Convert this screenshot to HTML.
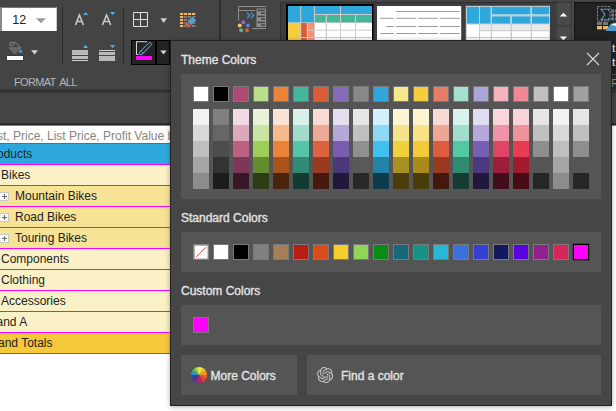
<!DOCTYPE html>
<html><head><meta charset="utf-8"><title>Color picker</title>
<style>
html,body{margin:0;padding:0;}
body{width:616px;height:411px;overflow:hidden;position:relative;background:#fff;font-family:"Liberation Sans",sans-serif;}
div,svg,span{position:absolute;box-sizing:border-box;}
.t{white-space:nowrap;line-height:1;}
.h{transform-origin:0 50%;color:#e4e4e4;font-size:12px;-webkit-text-stroke:0.35px #e4e4e4;}
</style></head><body>

<div style="left:0;top:0;width:616px;height:124px;background:#444444"></div>
<svg style="left:0;top:0" width="616" height="130"><rect x="0" y="89.4" width="616" height="3.2" fill="#303030"/><rect x="0" y="123.2" width="616" height="3" fill="#2a2a2a"/></svg>
<svg style="left:0;top:120px" width="616" height="10"><rect x="0" y="5.6" width="616" height="5" fill="#fff"/></svg>
<div style="left:0;top:126px;width:616px;height:285px;background:#fff"></div>
<div class="t" style="left:-3px;top:130px;font-size:12px;color:#8a8480">st, Price, List Price, Profit Value by</div>
<div style="left:0;top:143px;width:172px;height:22px;background:#2EA8DC;border-top:1px solid #f0f;"></div>
<div class="t" style="left:-3px;top:148px;font-size:12px;color:#222">oducts</div>
<div style="left:0;top:164px;width:172px;height:22px;background:#FBF1C6;border-top:1px solid #f0f;"></div>
<div class="t" style="left:1px;top:169px;font-size:12px;color:#222">Bikes</div>
<div style="left:0;top:185px;width:172px;height:22px;background:#F7E395;border-top:1px solid #f0f;"></div>
<div class="t" style="left:15px;top:190px;font-size:12px;color:#222">Mountain Bikes</div>
<div style="left:-1px;top:192px;width:10px;height:9px;border:1px solid #c8c8c8;background:#fafafa"></div>
<div style="left:2px;top:196px;width:5px;height:1px;background:#666"></div>
<div style="left:4px;top:194px;width:1px;height:5px;background:#666"></div>
<div style="left:0;top:206px;width:172px;height:22px;background:#F7E395;border-top:1px solid #f0f;"></div>
<div class="t" style="left:15px;top:211px;font-size:12px;color:#222">Road Bikes</div>
<div style="left:-1px;top:213px;width:10px;height:9px;border:1px solid #c8c8c8;background:#fafafa"></div>
<div style="left:2px;top:217px;width:5px;height:1px;background:#666"></div>
<div style="left:4px;top:215px;width:1px;height:5px;background:#666"></div>
<div style="left:0;top:227px;width:172px;height:22px;background:#F7E395;border-top:1px solid #f0f;"></div>
<div class="t" style="left:15px;top:232px;font-size:12px;color:#222">Touring Bikes</div>
<div style="left:-1px;top:234px;width:10px;height:9px;border:1px solid #c8c8c8;background:#fafafa"></div>
<div style="left:2px;top:238px;width:5px;height:1px;background:#666"></div>
<div style="left:4px;top:236px;width:1px;height:5px;background:#666"></div>
<div style="left:0;top:248px;width:172px;height:22px;background:#FBF1C6;border-top:1px solid #f0f;"></div>
<div class="t" style="left:1px;top:253px;font-size:12px;color:#222">Components</div>
<div style="left:0;top:269px;width:172px;height:22px;background:#FBF1C6;border-top:1px solid #f0f;"></div>
<div class="t" style="left:1px;top:274px;font-size:12px;color:#222">Clothing</div>
<div style="left:0;top:290px;width:172px;height:22px;background:#FBF1C6;border-top:1px solid #f0f;"></div>
<div class="t" style="left:1px;top:295px;font-size:12px;color:#222">Accessories</div>
<div style="left:0;top:311px;width:172px;height:22px;background:#FBF1C6;border-top:1px solid #f0f;"></div>
<div class="t" style="left:-3.5px;top:316px;font-size:12px;color:#222">and A</div>
<div style="left:0;top:332px;width:172px;height:22px;background:#F5C93B;border-top:1px solid #f0f;"></div>
<div class="t" style="left:-2px;top:337px;font-size:12px;color:#222">and Totals</div>
<div style="left:0;top:353px;width:172px;height:1px;background:#f0f"></div>
<div style="left:0px;top:7px;width:57px;height:24px;background:#fff;border-left:2px solid #8a8a8a;border-top:1px solid #777;border-right:1px solid #ccc"></div>
<div class="t" style="left:12.3px;top:14px;font-size:12.5px;color:#222">12</div>
<div class="t" style="left:14px;top:77px;font-size:11px;color:#b4b4b4;letter-spacing:-0.68px;word-spacing:2.1px">FORMAT ALL</div>
<div style="left:280px;top:2px;width:292px;height:40px;background:#3d3d3d;border-left:1px solid #2e2e2e;border-top:1px solid #2e2e2e"></div>
<div style="left:574px;top:2px;width:42px;height:72px;background:#222;border-left:1px solid #111;border-top:1px solid #111"></div>
<div style="left:574px;top:74px;width:42px;height:15px;background:#2b2b2b;border-top:1px solid #555"></div>
<div class="t" style="left:612px;top:43.3px;font-size:11.5px;color:#fff">t</div>
<div class="t" style="left:612px;top:56.9px;font-size:11.5px;color:#fff">t</div>
<div class="t" style="left:611px;top:78px;font-size:11px;color:#999">R</div>
<svg style="left:0;top:0" width="616" height="411" viewBox="0 0 616 411"><path d="M36 18.2H46L41 23.2Z" fill="#9a9a9a"/><rect x="62" y="7" width="1" height="58" fill="#2e2e2e"/><rect x="123" y="7" width="1" height="58" fill="#2e2e2e"/><rect x="219" y="0" width="2" height="40" fill="#2e2e2e"/><path d="M9 47.8H20.6L14.6 53.8Z" fill="#646464" stroke="#858585" stroke-width="0.7"/><path d="M10.3 45.8V42.6H15.4L20.6 47.8M10.3 45.3H12.6L15 43.4" fill="none" stroke="#8c8c8c" stroke-width="0.9"/><path d="M20.6 49.1L22 51.2A1.45 1.45 0 1 1 19.2 51.2Z" fill="#559fd6"/><rect x="6.5" y="55.5" width="17" height="5" fill="#333"/><rect x="7" y="56" width="16" height="4" fill="#fff"/><path d="M31 50.3H38L34.5 54.6Z" fill="#d0d0d0"/><path d="M75.4 25.1L79.45 15L83.5 25.1M76.9 21.6H82M102.4 25.1L106.55 15L110.7 25.1M104 21.6H109.1" fill="none" stroke="#c8c8c8" stroke-width="1.5" stroke-linejoin="miter"/><path d="M83 15.1H88.2L85.6 11.9Z" fill="#5aa8dc"/><path d="M110 12H115.2L112.6 15.2Z" fill="#5aa8dc"/><path d="M83 48H88.2L85.6 44.8Z" fill="#5aa8dc"/><path d="M110 45H115.2L112.6 48.2Z" fill="#5aa8dc"/><g fill="#b8b8b8" stroke="#d4d4d4" stroke-width="0.6"><rect x="72.3" y="50.3" width="15.4" height="4.4"/><rect x="72.3" y="56.3" width="15.4" height="2.4"/><rect x="99.3" y="52.3" width="15.4" height="2.4"/><rect x="99.3" y="56.3" width="15.4" height="4.4"/></g><rect x="72" y="60" width="16" height="1" fill="#d0d0d0"/><rect x="99" y="50" width="16" height="1" fill="#d0d0d0"/><path d="M133.5 12.5H147.5V26.5H133.5ZM140.5 12.5V26.5M133.5 19.5H147.5" fill="none" stroke="#e0e0e0" stroke-width="1"/><path d="M160.4 18.2H167L163.7 23Z" fill="#d0d0d0"/><rect x="180" y="13" width="3.2" height="2" fill="#f2b866"/><rect x="184" y="13" width="3.2" height="2" fill="#f2b866"/><rect x="188" y="13" width="3.2" height="2" fill="#f2b866"/><rect x="192" y="13" width="3.2" height="2" fill="#f2b866"/><rect x="180" y="16" width="3.2" height="2" fill="#f2b866"/><rect x="184" y="16" width="3.2" height="2" fill="#808080"/><rect x="188" y="16" width="3.2" height="2" fill="#808080"/><rect x="192" y="16" width="3.2" height="2" fill="#808080"/><rect x="180" y="19" width="3.2" height="2" fill="#f2b866"/><rect x="184" y="19" width="3.2" height="2" fill="#808080"/><rect x="188" y="19" width="3.2" height="2" fill="#808080"/><rect x="192" y="19" width="3.2" height="2" fill="#808080"/><rect x="180" y="22" width="3.2" height="2" fill="#f2b866"/><rect x="184" y="22" width="3.2" height="2" fill="#808080"/><rect x="188" y="22" width="3.2" height="2" fill="#808080"/><rect x="192" y="22" width="3.2" height="2" fill="#808080"/><rect x="180" y="25" width="3.2" height="2" fill="#f2b866"/><rect x="184" y="25" width="3.2" height="2" fill="#808080"/><rect x="188" y="25" width="3.2" height="2" fill="#808080"/><rect x="192" y="25" width="3.2" height="2" fill="#808080"/><path d="M187.2 21.7L192.6 16.3L196.4 20.4L191 25.6Z" fill="#559fd2" stroke="#444" stroke-width="0.6"/><path d="M184.3 23.8L186.6 21.9L190.8 26L188.6 28.3Z" fill="#e0604a" stroke="#444" stroke-width="0.6"/><path d="M238.5 20.5V6.5H266M238.5 10.5H255M252 28.5H266" fill="none" stroke="#8e8e8e" stroke-width="1"/><rect x="256.5" y="8.5" width="9.5" height="18.5" fill="#8e8e8e"/><rect x="257.6" y="9.6" width="7.3" height="1.6" fill="#444"/><rect x="261" y="12.3" width="3.9" height="1.6" fill="#444"/><rect x="257.6" y="15.6" width="7.3" height="1.6" fill="#444"/><rect x="261" y="18.3" width="3.9" height="1.6" fill="#444"/><rect x="257.6" y="21.6" width="7.3" height="1.6" fill="#444"/><rect x="261" y="24.3" width="3.9" height="1.6" fill="#444"/><path d="M246.9 12.7L249.7 15.4L246.9 18.1M250.9 12.7L253.7 15.4L250.9 18.1" fill="none" stroke="#3aa0e0" stroke-width="1.2"/><circle cx="243.4" cy="22.2" r="2" fill="#a060c0"/><circle cx="239.7" cy="25.4" r="2" fill="#f0c070"/><circle cx="248" cy="25.4" r="2" fill="#4a80d0"/><circle cx="241.1" cy="30.2" r="2" fill="#6aaa8a"/><circle cx="247" cy="30.2" r="2" fill="#e06030"/><rect x="286" y="4" width="87.5" height="40" fill="#000"/><rect x="288" y="6" width="84" height="38" fill="#ccc"/><rect x="288" y="6" width="12.2" height="16.3" fill="#2EA8DC"/><rect x="301.2" y="6" width="12.8" height="16.3" fill="#2EA8DC"/><rect x="315" y="6" width="25" height="8" fill="#2EA8DC"/><rect x="341" y="6" width="31" height="8" fill="#2EA8DC"/><rect x="315" y="15" width="10.7" height="7.3" fill="#42B79A"/><rect x="327" y="15" width="13" height="7.3" fill="#42B79A"/><rect x="341" y="15" width="14" height="7.3" fill="#42B79A"/><rect x="356" y="15" width="16" height="7.3" fill="#42B79A"/><rect x="288" y="23" width="12.2" height="14" fill="#F5CD3D"/><rect x="288" y="38" width="12.2" height="6" fill="#F5CD3D"/><rect x="301.2" y="23" width="5.6" height="14" fill="#DC5C35"/><rect x="301.2" y="38" width="5.6" height="6" fill="#DC5C35"/><rect x="307.8" y="23" width="6.2" height="6.7" fill="#FA9070"/><rect x="307.8" y="30.7" width="6.2" height="6.3" fill="#FA9070"/><rect x="307.8" y="38" width="6.2" height="6" fill="#FA9070"/><rect x="315" y="23" width="10.699999999999989" height="6.699999999999999" fill="#fff"/><rect x="315" y="30.7" width="10.699999999999989" height="6.300000000000001" fill="#fff"/><rect x="315" y="38" width="10.699999999999989" height="6" fill="#fff"/><rect x="327" y="23" width="13" height="6.699999999999999" fill="#fff"/><rect x="327" y="30.7" width="13" height="6.300000000000001" fill="#fff"/><rect x="327" y="38" width="13" height="6" fill="#fff"/><rect x="341" y="23" width="14" height="6.699999999999999" fill="#fff"/><rect x="341" y="30.7" width="14" height="6.300000000000001" fill="#fff"/><rect x="341" y="38" width="14" height="6" fill="#fff"/><rect x="356" y="23" width="16" height="6.699999999999999" fill="#fff"/><rect x="356" y="30.7" width="16" height="6.300000000000001" fill="#fff"/><rect x="356" y="38" width="16" height="6" fill="#fff"/><rect x="377" y="6" width="84.2" height="38" fill="#fff"/><g fill="#9a9a9a"><rect x="396.2" y="11" width="63.6" height="1"/><rect x="380.3" y="17.8" width="13.5" height="1"/><rect x="396.2" y="17.8" width="19.6" height="1"/><rect x="418.2" y="17.8" width="19.6" height="1"/><rect x="440.2" y="17.8" width="19.6" height="1"/><rect x="386.4" y="26" width="7.400000000000034" height="1"/><rect x="396.2" y="26" width="19.6" height="1"/><rect x="418.2" y="26" width="19.6" height="1"/><rect x="440.2" y="26" width="19.6" height="1"/><rect x="380.3" y="33" width="13.5" height="1"/><rect x="396.2" y="33" width="19.6" height="1"/><rect x="418.2" y="33" width="19.6" height="1"/><rect x="440.2" y="33" width="19.6" height="1"/></g><rect x="465.8" y="5.8" width="84.2" height="38" fill="#ccc"/><rect x="466.8" y="6.8" width="82.4" height="37" fill="#fff"/><rect x="466.8" y="6.8" width="12.2" height="17" fill="#2EA8DC"/><rect x="480" y="6.8" width="10.8" height="17" fill="#2EA8DC"/><rect x="492" y="6.8" width="38.7" height="7.8" fill="#2EA8DC"/><rect x="532" y="6.8" width="17.2" height="7.8" fill="#2EA8DC"/><rect x="492" y="16.2" width="18.6" height="7.6" fill="#2EA8DC"/><rect x="512" y="16.2" width="18.7" height="7.6" fill="#2EA8DC"/><rect x="532" y="16.2" width="17.2" height="7.6" fill="#2EA8DC"/><rect x="480" y="24.5" width="69.2" height="5.3" fill="#e8e8e8"/><g fill="#ccc"><rect x="479" y="6.8" width="1" height="37"/><rect x="490.8" y="6.8" width="1.2" height="37"/><rect x="510.6" y="14.6" width="1.4" height="30"/><rect x="530.7" y="6.8" width="1.3" height="37"/><rect x="492" y="14.6" width="57" height="1.6"/><rect x="466.8" y="23.8" width="82.4" height="0.8"/><rect x="480" y="30" width="69.2" height="1.2"/><rect x="466.8" y="37" width="82.4" height="1"/></g><rect x="557" y="2.7" width="13.4" height="22.2" fill="#4a4a4a"/><rect x="557" y="26.8" width="13.4" height="15" fill="#4a4a4a"/><path d="M559.7 16.6H567.1L563.4 12.7Z" fill="#fff"/><path d="M559.7 36.4H567.1L563.4 40.3Z" fill="#fff"/><rect x="572" y="2" width="2" height="40" fill="#4a4a4a"/><rect x="597.5" y="6.5" width="12.5" height="14.5" fill="none" stroke="#888" stroke-width="1" stroke-dasharray="2.2 1.2"/><path d="M608.6 11V9.3H601L605 14.6L601 19.8H608.6V18" fill="none" stroke="#4a9ad0" stroke-width="1.1"/><rect x="611.3" y="9.5" width="2.8" height="3" fill="#777"/><rect x="615" y="9.5" width="1" height="3" fill="#777"/><rect x="611.3" y="13.5" width="2.8" height="3" fill="#777"/><rect x="615" y="13.5" width="1" height="3" fill="#777"/><rect x="611.3" y="17.5" width="2.8" height="3" fill="#777"/><rect x="615" y="17.5" width="1" height="3" fill="#777"/><rect x="597" y="22" width="5" height="3" fill="#777"/><rect x="603" y="22" width="5" height="3" fill="#777"/><rect x="597" y="26" width="5" height="3.4" fill="#f0b860"/><rect x="603" y="26" width="5" height="3.4" fill="#f0b860"/><path d="M605.5 31L610.5 24Q612.5 22 616 22.5V31Z" fill="#4a9ad0"/><path d="M611 25Q613 23 616 23.5V26Q613.5 25 611 25Z" fill="#fff"/></svg>
<div style="left:170px;top:40px;width:442px;height:366px;background:#464646;border:1px solid #222;box-shadow:0 1px 5px rgba(0,0,0,.32)"></div>
<div style="left:131px;top:40px;width:39px;height:25px;background:#000"></div>
<div style="left:132px;top:41px;width:23px;height:23px;background:#232323"></div>
<div style="left:157px;top:41px;width:12px;height:23px;background:#232323"></div>
<div style="left:136px;top:56px;width:16px;height:4px;background:#f0f"></div>
<svg style="left:131px;top:40px" width="40" height="25" viewBox="131 40 40 25"><path d="M138.5 54.5H136.5V41.7H147" fill="none" stroke="#d8d8d8" stroke-width="1"/><g transform="rotate(-45 145.5 48.5)"><rect x="137.5" y="46.9" width="15.6" height="3.2" rx="1.4" fill="none" stroke="#5a9fd0" stroke-width="1"/><path d="M140.6 46.9V50.1" fill="none" stroke="#5a9fd0" stroke-width="0.9"/></g><path d="M160.3 50.4H166.7L163.5 54.6Z" fill="#d8d8d8"/></svg>
<div class="t h" style="left:181px;top:54px;transform:scaleX(1)">Theme Colors</div>
<svg style="left:586px;top:52px" width="14" height="14"><path d="M1 1L13 13M13 1L1 13" stroke="#d8d8d8" stroke-width="1.1" fill="none"/></svg>
<div style="left:181px;top:74px;width:420px;height:125px;background:#555"></div>
<div style="left:193px;top:86px;width:16px;height:16px;background:#FFFFFF;border:1px solid #7a7a7a"></div>
<div style="left:193px;top:109px;width:16px;height:16px;background:#F2F2F2"></div>
<div style="left:193px;top:125px;width:16px;height:16px;background:#D9D9D9"></div>
<div style="left:193px;top:141px;width:16px;height:16px;background:#BFBFBF"></div>
<div style="left:193px;top:157px;width:16px;height:16px;background:#A6A6A6"></div>
<div style="left:193px;top:173px;width:16px;height:16px;background:#8C8C8C"></div>
<div style="left:213px;top:86px;width:16px;height:16px;background:#000000;border:1px solid #7a7a7a"></div>
<div style="left:213px;top:109px;width:16px;height:16px;background:#808080"></div>
<div style="left:213px;top:125px;width:16px;height:16px;background:#666666"></div>
<div style="left:213px;top:141px;width:16px;height:16px;background:#4D4D4D"></div>
<div style="left:213px;top:157px;width:16px;height:16px;background:#333333"></div>
<div style="left:213px;top:173px;width:16px;height:16px;background:#1C1C1C"></div>
<div style="left:233px;top:86px;width:16px;height:16px;background:#B04A75;border:1px solid #7a7a7a"></div>
<div style="left:233px;top:109px;width:16px;height:16px;background:#F0DBE3"></div>
<div style="left:233px;top:125px;width:16px;height:16px;background:#DDA8BC"></div>
<div style="left:233px;top:141px;width:16px;height:16px;background:#BC6084"></div>
<div style="left:233px;top:157px;width:16px;height:16px;background:#7E3756"></div>
<div style="left:233px;top:173px;width:16px;height:16px;background:#371828"></div>
<div style="left:253px;top:86px;width:16px;height:16px;background:#B9E088;border:1px solid #7a7a7a"></div>
<div style="left:253px;top:109px;width:16px;height:16px;background:#E8F4D9"></div>
<div style="left:253px;top:125px;width:16px;height:16px;background:#C8E6A1"></div>
<div style="left:253px;top:141px;width:16px;height:16px;background:#9DCE57"></div>
<div style="left:253px;top:157px;width:16px;height:16px;background:#658C2E"></div>
<div style="left:253px;top:173px;width:16px;height:16px;background:#2C3D14"></div>
<div style="left:273px;top:86px;width:16px;height:16px;background:#EC8438;border:1px solid #7a7a7a"></div>
<div style="left:273px;top:109px;width:16px;height:16px;background:#FBE3D3"></div>
<div style="left:273px;top:125px;width:16px;height:16px;background:#F5B98B"></div>
<div style="left:273px;top:141px;width:16px;height:16px;background:#EA8337"></div>
<div style="left:273px;top:157px;width:16px;height:16px;background:#A9531A"></div>
<div style="left:273px;top:173px;width:16px;height:16px;background:#4B240B"></div>
<div style="left:293px;top:86px;width:16px;height:16px;background:#42B79A;border:1px solid #7a7a7a"></div>
<div style="left:293px;top:109px;width:16px;height:16px;background:#D9F1EA"></div>
<div style="left:293px;top:125px;width:16px;height:16px;background:#A0DCCB"></div>
<div style="left:293px;top:141px;width:16px;height:16px;background:#57C4A8"></div>
<div style="left:293px;top:157px;width:16px;height:16px;background:#318A74"></div>
<div style="left:293px;top:173px;width:16px;height:16px;background:#133B31"></div>
<div style="left:313px;top:86px;width:16px;height:16px;background:#DC5C35;border:1px solid #7a7a7a"></div>
<div style="left:313px;top:109px;width:16px;height:16px;background:#F8DCD3"></div>
<div style="left:313px;top:125px;width:16px;height:16px;background:#EDA993"></div>
<div style="left:313px;top:141px;width:16px;height:16px;background:#DC6341"></div>
<div style="left:313px;top:157px;width:16px;height:16px;background:#9A3A20"></div>
<div style="left:313px;top:173px;width:16px;height:16px;background:#45190E"></div>
<div style="left:333px;top:86px;width:16px;height:16px;background:#846BB9;border:1px solid #7a7a7a"></div>
<div style="left:333px;top:109px;width:16px;height:16px;background:#E4DEF0"></div>
<div style="left:333px;top:125px;width:16px;height:16px;background:#B6A8D6"></div>
<div style="left:333px;top:141px;width:16px;height:16px;background:#7A5DB3"></div>
<div style="left:333px;top:157px;width:16px;height:16px;background:#4C3778"></div>
<div style="left:333px;top:173px;width:16px;height:16px;background:#21183A"></div>
<div style="left:353px;top:86px;width:16px;height:16px;background:#888888;border:1px solid #7a7a7a"></div>
<div style="left:353px;top:109px;width:16px;height:16px;background:#E6E6E6"></div>
<div style="left:353px;top:125px;width:16px;height:16px;background:#C0C0C0"></div>
<div style="left:353px;top:141px;width:16px;height:16px;background:#909090"></div>
<div style="left:353px;top:157px;width:16px;height:16px;background:#595959"></div>
<div style="left:353px;top:173px;width:16px;height:16px;background:#282828"></div>
<div style="left:373px;top:86px;width:16px;height:16px;background:#2EA8DC;border:1px solid #7a7a7a"></div>
<div style="left:373px;top:109px;width:16px;height:16px;background:#D2F1FC"></div>
<div style="left:373px;top:125px;width:16px;height:16px;background:#8EDAF5"></div>
<div style="left:373px;top:141px;width:16px;height:16px;background:#40C0EE"></div>
<div style="left:373px;top:157px;width:16px;height:16px;background:#2282A8"></div>
<div style="left:373px;top:173px;width:16px;height:16px;background:#0E3A4E"></div>
<div style="left:393px;top:86px;width:16px;height:16px;background:#F7E88E;border:1px solid #7a7a7a"></div>
<div style="left:393px;top:109px;width:16px;height:16px;background:#FBF5D3"></div>
<div style="left:393px;top:125px;width:16px;height:16px;background:#F5E38B"></div>
<div style="left:393px;top:141px;width:16px;height:16px;background:#EFD140"></div>
<div style="left:393px;top:157px;width:16px;height:16px;background:#A89020"></div>
<div style="left:393px;top:173px;width:16px;height:16px;background:#4A3F0C"></div>
<div style="left:413px;top:86px;width:16px;height:16px;background:#F5CD3D;border:1px solid #7a7a7a"></div>
<div style="left:413px;top:109px;width:16px;height:16px;background:#FCF3D1"></div>
<div style="left:413px;top:125px;width:16px;height:16px;background:#F7E288"></div>
<div style="left:413px;top:141px;width:16px;height:16px;background:#F3CB39"></div>
<div style="left:413px;top:157px;width:16px;height:16px;background:#AB8A1C"></div>
<div style="left:413px;top:173px;width:16px;height:16px;background:#4A3C09"></div>
<div style="left:433px;top:86px;width:16px;height:16px;background:#E57E65;border:1px solid #7a7a7a"></div>
<div style="left:433px;top:109px;width:16px;height:16px;background:#F9DAD3"></div>
<div style="left:433px;top:125px;width:16px;height:16px;background:#EDA794"></div>
<div style="left:433px;top:141px;width:16px;height:16px;background:#DC5E40"></div>
<div style="left:433px;top:157px;width:16px;height:16px;background:#9A3820"></div>
<div style="left:433px;top:173px;width:16px;height:16px;background:#45180E"></div>
<div style="left:453px;top:86px;width:16px;height:16px;background:#A3E0CE;border:1px solid #7a7a7a"></div>
<div style="left:453px;top:109px;width:16px;height:16px;background:#D9F2EB"></div>
<div style="left:453px;top:125px;width:16px;height:16px;background:#A1DFCC"></div>
<div style="left:453px;top:141px;width:16px;height:16px;background:#53C8A5"></div>
<div style="left:453px;top:157px;width:16px;height:16px;background:#2E8B70"></div>
<div style="left:453px;top:173px;width:16px;height:16px;background:#133D31"></div>
<div style="left:473px;top:86px;width:16px;height:16px;background:#ADA4D8;border:1px solid #7a7a7a"></div>
<div style="left:473px;top:109px;width:16px;height:16px;background:#E1DDF0"></div>
<div style="left:473px;top:125px;width:16px;height:16px;background:#B4A7D9"></div>
<div style="left:473px;top:141px;width:16px;height:16px;background:#7560B5"></div>
<div style="left:473px;top:157px;width:16px;height:16px;background:#4A3880"></div>
<div style="left:473px;top:173px;width:16px;height:16px;background:#1F183A"></div>
<div style="left:493px;top:86px;width:16px;height:16px;background:#F3B4C0;border:1px solid #7a7a7a"></div>
<div style="left:493px;top:109px;width:16px;height:16px;background:#FAD5DC"></div>
<div style="left:493px;top:125px;width:16px;height:16px;background:#EE94A7"></div>
<div style="left:493px;top:141px;width:16px;height:16px;background:#DF4565"></div>
<div style="left:493px;top:157px;width:16px;height:16px;background:#9B1F3A"></div>
<div style="left:493px;top:173px;width:16px;height:16px;background:#420D1A"></div>
<div style="left:513px;top:86px;width:16px;height:16px;background:#F08898;border:1px solid #7a7a7a"></div>
<div style="left:513px;top:109px;width:16px;height:16px;background:#FAD3D9"></div>
<div style="left:513px;top:125px;width:16px;height:16px;background:#F0919E"></div>
<div style="left:513px;top:141px;width:16px;height:16px;background:#E83C52"></div>
<div style="left:513px;top:157px;width:16px;height:16px;background:#A11B2C"></div>
<div style="left:513px;top:173px;width:16px;height:16px;background:#460C13"></div>
<div style="left:533px;top:86px;width:16px;height:16px;background:#C0C0C0;border:1px solid #7a7a7a"></div>
<div style="left:533px;top:109px;width:16px;height:16px;background:#E6E6E6"></div>
<div style="left:533px;top:125px;width:16px;height:16px;background:#C0C0C0"></div>
<div style="left:533px;top:141px;width:16px;height:16px;background:#8E8E8E"></div>
<div style="left:533px;top:157px;width:16px;height:16px;background:#555555"></div>
<div style="left:533px;top:173px;width:16px;height:16px;background:#262626"></div>
<div style="left:553px;top:86px;width:16px;height:16px;background:#FFFFFF;border:1px solid #7a7a7a"></div>
<div style="left:553px;top:109px;width:16px;height:16px;background:#F2F2F2"></div>
<div style="left:553px;top:125px;width:16px;height:16px;background:#D9D9D9"></div>
<div style="left:553px;top:141px;width:16px;height:16px;background:#BFBFBF"></div>
<div style="left:553px;top:157px;width:16px;height:16px;background:#A6A6A6"></div>
<div style="left:553px;top:173px;width:16px;height:16px;background:#8C8C8C"></div>
<div style="left:573px;top:86px;width:16px;height:16px;background:#A0A0A0;border:1px solid #7a7a7a"></div>
<div style="left:573px;top:109px;width:16px;height:16px;background:#E6E6E6"></div>
<div style="left:573px;top:125px;width:16px;height:16px;background:#C0C0C0"></div>
<div style="left:573px;top:141px;width:16px;height:16px;background:#8E8E8E"></div>
<div style="left:573px;top:157px;width:16px;height:16px;background:#555555"></div>
<div style="left:573px;top:173px;width:16px;height:16px;background:#262626"></div>
<div class="t h" style="left:181px;top:212px;transform:scaleX(1)">Standard Colors</div>
<div style="left:181px;top:232px;width:420px;height:40px;background:#555"></div>
<svg style="left:193px;top:244px" width="16" height="16"><rect x="0" y="0" width="16" height="16" fill="#848484"/><rect x="1.6" y="1.6" width="13" height="13" fill="#fff"/><path d="M3.2 13L13 3.2" stroke="#e8452c" stroke-width="1"/></svg>
<div style="left:213px;top:244px;width:16px;height:16px;background:#FFFFFF;border:1px solid #7a7a7a"></div>
<div style="left:233px;top:244px;width:16px;height:16px;background:#000000;border:1px solid #7a7a7a"></div>
<div style="left:253px;top:244px;width:16px;height:16px;background:#808080;border:1px solid #7a7a7a"></div>
<div style="left:273px;top:244px;width:16px;height:16px;background:#A67F59;border:1px solid #7a7a7a"></div>
<div style="left:293px;top:244px;width:16px;height:16px;background:#B81C12;border:1px solid #7a7a7a"></div>
<div style="left:313px;top:244px;width:16px;height:16px;background:#DC4C18;border:1px solid #7a7a7a"></div>
<div style="left:333px;top:244px;width:16px;height:16px;background:#F7CE2D;border:1px solid #7a7a7a"></div>
<div style="left:353px;top:244px;width:16px;height:16px;background:#8FD55B;border:1px solid #7a7a7a"></div>
<div style="left:373px;top:244px;width:16px;height:16px;background:#078C14;border:1px solid #7a7a7a"></div>
<div style="left:393px;top:244px;width:16px;height:16px;background:#176878;border:1px solid #7a7a7a"></div>
<div style="left:413px;top:244px;width:16px;height:16px;background:#149284;border:1px solid #7a7a7a"></div>
<div style="left:433px;top:244px;width:16px;height:16px;background:#27B8D4;border:1px solid #7a7a7a"></div>
<div style="left:453px;top:244px;width:16px;height:16px;background:#3A70DE;border:1px solid #7a7a7a"></div>
<div style="left:473px;top:244px;width:16px;height:16px;background:#3340D2;border:1px solid #7a7a7a"></div>
<div style="left:493px;top:244px;width:16px;height:16px;background:#111A5E;border:1px solid #7a7a7a"></div>
<div style="left:513px;top:244px;width:16px;height:16px;background:#5A03E0;border:1px solid #7a7a7a"></div>
<div style="left:533px;top:244px;width:16px;height:16px;background:#92208F;border:1px solid #7a7a7a"></div>
<div style="left:553px;top:244px;width:16px;height:16px;background:#D6275D;border:1px solid #7a7a7a"></div>
<div style="left:573px;top:244px;width:16px;height:16px;background:#FF00FF;border:1px solid #000;box-shadow:0 0 0 0.3px #000"></div>
<div class="t h" style="left:181px;top:285px;transform:scaleX(1)">Custom Colors</div>
<div style="left:181px;top:305px;width:420px;height:40px;background:#555"></div>
<div style="left:193px;top:317px;width:16px;height:16px;background:#f0f;border:1px solid #7a7a7a"></div>
<div style="left:181px;top:355px;width:116px;height:40px;background:#555"></div>
<div style="left:307px;top:355px;width:294px;height:40px;background:#555"></div>
<div class="t h" style="left:210.5px;top:369.5px;transform:scaleX(1)">More Colors</div>
<div class="t h" style="left:341px;top:369.5px;transform:scaleX(1)">Find a color</div>
<svg style="left:190px;top:366px" width="18" height="18" viewBox="-9 -9 18 18"><path d="M0 0L0.00 -8.10A8.1 8.1 0 0 1 4.05 -7.01Z" fill="#F5EC3D"/><path d="M0 0L4.05 -7.01A8.1 8.1 0 0 1 7.01 -4.05Z" fill="#F7B731"/><path d="M0 0L7.01 -4.05A8.1 8.1 0 0 1 8.10 0.00Z" fill="#F7931E"/><path d="M0 0L8.10 0.00A8.1 8.1 0 0 1 7.01 4.05Z" fill="#F05A28"/><path d="M0 0L7.01 4.05A8.1 8.1 0 0 1 4.05 7.01Z" fill="#EE3E2C"/><path d="M0 0L4.05 7.01A8.1 8.1 0 0 1 0.00 8.10Z" fill="#C1274A"/><path d="M0 0L0.00 8.10A8.1 8.1 0 0 1 -4.05 7.01Z" fill="#8E2B8E"/><path d="M0 0L-4.05 7.01A8.1 8.1 0 0 1 -7.01 4.05Z" fill="#5B2D90"/><path d="M0 0L-7.01 4.05A8.1 8.1 0 0 1 -8.10 0.00Z" fill="#3F3F9F"/><path d="M0 0L-8.10 0.00A8.1 8.1 0 0 1 -7.01 -4.05Z" fill="#2790D0"/><path d="M0 0L-7.01 -4.05A8.1 8.1 0 0 1 -4.05 -7.01Z" fill="#5DB446"/><path d="M0 0L-4.05 -7.01A8.1 8.1 0 0 1 -0.00 -8.10Z" fill="#C6DC3C"/></svg>
<svg style="left:317px;top:366.8px" width="16.2" height="16.2" viewBox="0 0 24 24"><path d="M22.2819 9.8211a5.9847 5.9847 0 0 0-.5157-4.9108 6.0462 6.0462 0 0 0-6.5098-2.9A6.0651 6.0651 0 0 0 4.9807 4.1818a5.9847 5.9847 0 0 0-3.9977 2.9 6.0462 6.0462 0 0 0 .7427 7.0966 5.98 5.98 0 0 0 .511 4.9107 6.051 6.051 0 0 0 6.5146 2.9001A5.9847 5.9847 0 0 0 13.2599 24a6.0557 6.0557 0 0 0 5.7718-4.2058 5.9894 5.9894 0 0 0 3.9977-2.9001 6.0557 6.0557 0 0 0-.7475-7.0729zm-9.022 12.6081a4.4755 4.4755 0 0 1-2.8764-1.0408l.1419-.0804 4.7783-2.7582a.7948.7948 0 0 0 .3927-.6813v-6.7369l2.02 1.1686a.071.071 0 0 1 .038.052v5.5826a4.504 4.504 0 0 1-4.4945 4.4944zm-9.6607-4.1254a4.4708 4.4708 0 0 1-.5346-3.0137l.142.0852 4.783 2.7582a.7712.7712 0 0 0 .7806 0l5.8428-3.3685v2.3324a.0804.0804 0 0 1-.0332.0615L9.74 19.9502a4.4992 4.4992 0 0 1-6.1408-1.6464zM2.3408 7.8956a4.485 4.485 0 0 1 2.3655-1.9728V11.6a.7664.7664 0 0 0 .3879.6765l5.8144 3.3543-2.0201 1.1685a.0757.0757 0 0 1-.071 0l-4.8303-2.7865A4.504 4.504 0 0 1 2.3408 7.872zm16.5963 3.8558L13.1038 8.364 15.1192 7.2a.0757.0757 0 0 1 .071 0l4.8303 2.7913a4.4944 4.4944 0 0 1-.6765 8.1042v-5.6772a.79.79 0 0 0-.407-.667zm2.0107-3.0231l-.142-.0852-4.7735-2.7818a.7759.7759 0 0 0-.7854 0L9.409 9.2297V6.8974a.0662.0662 0 0 1 .0284-.0615l4.8303-2.7866a4.4992 4.4992 0 0 1 6.6802 4.66zM8.3065 12.863l-2.02-1.1638a.0804.0804 0 0 1-.038-.0567V6.0742a4.4992 4.4992 0 0 1 7.3757-3.4537l-.142.0805L8.704 5.459a.7948.7948 0 0 0-.3927.6813zm1.0976-2.3654l2.602-1.4998 2.6069 1.4998v2.9994l-2.5974 1.4997-2.6067-1.4997Z" fill="#c4c4c4"/></svg>
</body></html>
